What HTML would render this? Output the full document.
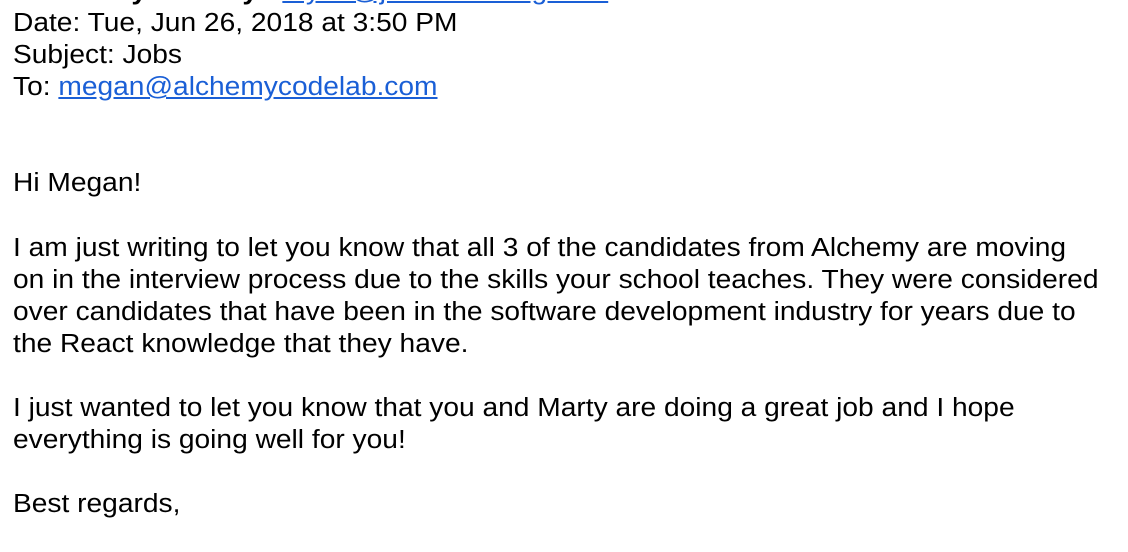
<!DOCTYPE html>
<html><head><meta charset="utf-8"><style>
html,body{margin:0;padding:0;background:#fff;width:1128px;height:552px;overflow:hidden}
.w{position:absolute;left:13px;top:-25px;font-family:"Liberation Sans",Arial,sans-serif;font-size:25.5px;line-height:32.07px;color:#000;white-space:nowrap;transform:scaleX(1.104);transform-origin:0 0}
a{color:#1a5fd6;text-decoration:underline}
p{margin:0}
</style></head><body><div class="w">
<p><b>From: Taylor Kelly</b> &lt;<a>taylor@jobsrecruiting.com</a>&gt;</p>
<p>Date: Tue, Jun 26, 2018 at 3:50 PM</p>
<p>Subject: Jobs</p>
<p>To: <a>megan@alchemycodelab.com</a></p>
<p>&nbsp;</p><p>&nbsp;</p>
<p>Hi Megan!</p>
<p>&nbsp;</p>
<p>I am just writing to let you know that all 3 of the candidates from Alchemy are moving</p>
<p>on in the interview process due to the skills your school teaches. They were considered</p>
<p>over candidates that have been in the software development industry for years due to</p>
<p>the React knowledge that they have.</p>
<p>&nbsp;</p>
<p>I just wanted to let you know that you and Marty are doing a great job and I hope</p>
<p>everything is going well for you!</p>
<p>&nbsp;</p>
<p>Best regards,</p>
</div></body></html>
